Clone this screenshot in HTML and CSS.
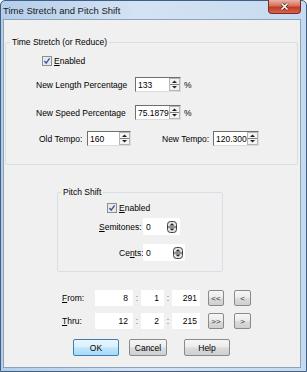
FILE: index.html
```html
<!DOCTYPE html>
<html lang="en">
<head>
    <meta charset="UTF-8">
    <title>Time Stretch and Pitch Shift</title>
    <link rel="stylesheet" href="styles.css">
</head>
<body>
    <div class="window">
        <div class="titlebar">
            <span class="title">Time Stretch and Pitch Shift</span>
            <span class="close">
                <svg width="11" height="9" viewBox="0 0 11 9"><path d="M2.5 1.5 L8.5 7.5 M8.5 1.5 L2.5 7.5" stroke="#5a2418" stroke-width="3"/><path d="M2.5 1.5 L8.5 7.5 M8.5 1.5 L2.5 7.5" stroke="#fff" stroke-width="1.6"/></svg>
            </span>
        </div>
        <div class="client">
            <fieldset class="group stretch">
                <legend>Time Stretch (or Reduce)</legend>
                <div class="row check-row">
                    <span class="checkbox"><svg width="10" height="10" viewBox="0 0 10 10"><rect x="0.5" y="0.5" width="9" height="9" fill="#e9e9ec" stroke="#8e8f8f"/><path d="M2.4 5 L4.2 7.2 L7.6 2.4" fill="none" stroke="#3c55a6" stroke-width="1.4"/></svg></span>
                    <span><u>E</u>nabled</span>
                </div>
                <div class="row pct-row first">
                    <span class="lbl pct-lbl">New Length Percentage</span>
                    <span class="spin sunken w46"><span class="val">133</span><span class="arrows"><svg width="11" height="13" viewBox="0 0 11 13"><rect x="0.5" y="0.5" width="10" height="12" fill="#f3f3f3" stroke="#b5b5b5"/><line x1="1" y1="6.5" x2="10" y2="6.5" stroke="#7d7d7d"/><path d="M3 5 L5.5 2.5 L8 5Z" fill="#222"/><path d="M3 8 L5.5 10.5 L8 8Z" fill="#222"/></svg></span></span>
                    <span class="unit">%</span>
                </div>
                <div class="row pct-row second">
                    <span class="lbl pct-lbl">New Speed Percentage</span>
                    <span class="spin sunken w46"><span class="val">75.1879</span><span class="arrows"><svg width="11" height="13" viewBox="0 0 11 13"><rect x="0.5" y="0.5" width="10" height="12" fill="#f3f3f3" stroke="#b5b5b5"/><line x1="1" y1="6.5" x2="10" y2="6.5" stroke="#7d7d7d"/><path d="M3 5 L5.5 2.5 L8 5Z" fill="#222"/><path d="M3 8 L5.5 10.5 L8 8Z" fill="#222"/></svg></span></span>
                    <span class="unit">%</span>
                </div>
                <div class="row tempo-row">
                    <span class="lbl old-lbl">Old Tempo:</span>
                    <span class="spin sunken w44"><span class="val">160</span><span class="arrows"><svg width="11" height="13" viewBox="0 0 11 13"><rect x="0.5" y="0.5" width="10" height="12" fill="#f3f3f3" stroke="#b5b5b5"/><line x1="1" y1="6.5" x2="10" y2="6.5" stroke="#7d7d7d"/><path d="M3 5 L5.5 2.5 L8 5Z" fill="#222"/><path d="M3 8 L5.5 10.5 L8 8Z" fill="#222"/></svg></span></span>
                    <span class="lbl new-lbl">New Tempo:</span>
                    <span class="spin sunken w46"><span class="val">120.300</span><span class="arrows"><svg width="11" height="13" viewBox="0 0 11 13"><rect x="0.5" y="0.5" width="10" height="12" fill="#f3f3f3" stroke="#b5b5b5"/><line x1="1" y1="6.5" x2="10" y2="6.5" stroke="#7d7d7d"/><path d="M3 5 L5.5 2.5 L8 5Z" fill="#222"/><path d="M3 8 L5.5 10.5 L8 8Z" fill="#222"/></svg></span></span>
                </div>
            </fieldset>

            <fieldset class="group pitch">
                <legend>Pitch Shift</legend>
                <div class="row pitch-check">
                    <span class="checkbox"><svg width="10" height="10" viewBox="0 0 10 10"><rect x="0.5" y="0.5" width="9" height="9" fill="#e9e9ec" stroke="#8e8f8f"/><path d="M2.4 5 L4.2 7.2 L7.6 2.4" fill="none" stroke="#3c55a6" stroke-width="1.4"/></svg></span>
                    <span><u>E</u>nabled</span>
                </div>
                <div class="row semi-row">
                    <span class="lbl semi-lbl"><u>S</u>emitones:</span>
                    <span class="spin flat w37"><span class="val">0</span><span class="round"><svg width="10" height="12" viewBox="0 0 10 12"><rect x="0.5" y="0.5" width="9" height="11" rx="3" fill="#e4e4e4" stroke="#3d3d3d"/><line x1="1" y1="6" x2="9" y2="6" stroke="#3d3d3d"/><path d="M2.5 4.6 L5 2.2 L7.5 4.6Z" fill="#222"/><path d="M2.5 7.4 L5 9.8 L7.5 7.4Z" fill="#222"/></svg></span></span>
                </div>
                <div class="row cents-row">
                    <span class="lbl cents-lbl">Ce<u>n</u>ts:</span>
                    <span class="spin flat w42"><span class="val">0</span><span class="round"><svg width="10" height="12" viewBox="0 0 10 12"><rect x="0.5" y="0.5" width="9" height="11" rx="3" fill="#e4e4e4" stroke="#3d3d3d"/><line x1="1" y1="6" x2="9" y2="6" stroke="#3d3d3d"/><path d="M2.5 4.6 L5 2.2 L7.5 4.6Z" fill="#222"/><path d="M2.5 7.4 L5 9.8 L7.5 7.4Z" fill="#222"/></svg></span></span>
                </div>
            </fieldset>

            <div class="row range-row from-row">
                <span class="lbl range-lbl"><u>F</u>rom:</span>
                <span class="field f1">8</span><span class="colon">:</span>
                <span class="field f2">1</span><span class="colon">:</span>
                <span class="field f3">291</span>
                <span class="btn nav first-nav">&lt;&lt;</span>
                <span class="btn nav second-nav">&lt;</span>
            </div>
            <div class="row range-row thru-row">
                <span class="lbl range-lbl"><u>T</u>hru:</span>
                <span class="field f1">12</span><span class="colon">:</span>
                <span class="field f2">2</span><span class="colon">:</span>
                <span class="field f3">215</span>
                <span class="btn nav first-nav">&gt;&gt;</span>
                <span class="btn nav second-nav">&gt;</span>
            </div>

            <div class="row buttons">
                <span class="btn push default">OK</span>
                <span class="btn push cancel">Cancel</span>
                <span class="btn push help">Help</span>
            </div>
        </div>
    </div>
</body>
</html>
```

FILE: styles.css
```css
body {
    margin: 0;
    font-family: "Liberation Sans", Arial, sans-serif;
    font-size: 8.5px;
    color: #000;
    background: #fff;
}

.window {
    width: 307px;
    height: 372px;
    box-sizing: border-box;
    border: 1px solid #3f5f84;
    border-radius: 5px 5px 0 0;
    background: linear-gradient(to right, #b4cde9, #d4e3f4 45%, #c6daef);
}

.titlebar {
    display: flex;
    align-items: flex-start;
    height: 18px;
}

.title {
    font-size: 9.5px;
    color: #1b1b1b;
    padding: 4px 0 0 2px;
}

.close {
    margin-left: auto;
    margin-right: 5px;
    margin-top: -1px;
    width: 33px;
    height: 14px;
    box-sizing: border-box;
    display: flex;
    align-items: center;
    justify-content: center;
    border: 1px solid #7b2c22;
    border-top: none;
    border-radius: 0 0 4px 4px;
    background: linear-gradient(#eab2a4, #d6705d 45%, #bf3b26 55%, #d8634a);
}

.client {
    width: 298px;
    height: 349px;
    box-sizing: border-box;
    margin: 0 5px 3px 2px;
    border: 1px solid #8da3bc;
    background: #f0f0f0;
    overflow: hidden;
}

.group {
    box-sizing: border-box;
    margin: 0;
    padding: 0;
    border: 1px solid #d5dfe5;
    border-radius: 2px;
    min-inline-size: 0;
}

.group legend {
    padding: 0 2px;
    line-height: 12px;
}

.stretch {
    width: 293px;
    margin: 16px 0 0 1px;
    padding-bottom: 18px;
}

.stretch legend {
    margin-left: 4px;
}

.pitch {
    width: 166px;
    margin: 21px 0 0 53px;
    padding-bottom: 10px;
}

.pitch legend {
    margin-left: 3px;
}

.row {
    display: flex;
    align-items: center;
}

.check-row {
    margin-top: 7px;
    height: 12px;
    padding-left: 36px;
}

.checkbox {
    display: flex;
    width: 10px;
    height: 10px;
    margin-right: 2px;
}

.pct-row {
    height: 15px;
    padding-left: 30px;
}

.pct-row.first {
    margin-top: 10px;
}

.pct-row.second {
    margin-top: 13px;
}

.pct-lbl {
    width: 99px;
}

.unit {
    margin-left: 3px;
}

.tempo-row {
    margin-top: 11px;
    height: 15px;
    padding-left: 33px;
}

.old-lbl {
    width: 48px;
}

.new-lbl {
    width: 51px;
    margin-left: 31px;
}

.spin {
    display: flex;
    align-items: center;
    box-sizing: border-box;
    background: #fff;
    overflow: hidden;
    white-space: nowrap;
}

.sunken {
    height: 15px;
    border: 1px solid;
    border-color: #6e6e6e #dcdcdc #dcdcdc #6e6e6e;
}

.sunken .val {
    flex: 1;
    padding-left: 2px;
    overflow: hidden;
}

.arrows {
    display: flex;
    flex-shrink: 0;
}

.flat {
    height: 17px;
}

.flat .val {
    flex: 1;
    padding-left: 3px;
}

.round {
    display: flex;
    margin-right: 3px;
}

.w37 { width: 37px; }
.w42 { width: 42px; }
.w44 { width: 44px; }
.w46 { width: 46px; }

.w42 .round {
    margin-right: 2px;
}

.pitch-check {
    margin-top: 4px;
    height: 11px;
    padding-left: 49px;
}

.semi-row {
    margin-top: 5px;
    height: 17px;
    padding-left: 41px;
}

.semi-lbl {
    width: 44px;
}

.cents-row {
    margin-top: 9px;
    height: 17px;
    padding-left: 61px;
}

.cents-lbl {
    width: 24px;
}

.range-row {
    height: 16px;
    padding-left: 58px;
}

.from-row {
    margin-top: 18px;
}

.thru-row {
    margin-top: 7px;
}

.range-lbl {
    width: 33px;
}

.field {
    height: 16px;
    box-sizing: border-box;
    background: #fff;
    text-align: right;
    padding-right: 5px;
    line-height: 16px;
}

.f1 { width: 38px; }
.f2 { width: 23px; }
.f3 { width: 28px; padding-right: 3px; }

.colon {
    width: 8px;
    text-align: center;
    color: #6a6a6a;
}

.colon + .f2 {
    margin-left: 0;
}

.btn {
    display: flex;
    align-items: center;
    justify-content: center;
    box-sizing: border-box;
    border: 1px solid #8a8a8a;
    border-radius: 2px;
    background: linear-gradient(#f6f6f6, #ebebeb 48%, #dcdcdc 52%, #cfcfcf);
}

.nav {
    height: 16px;
    font-size: 8px;
    color: #333;
}

.first-nav {
    width: 16px;
    margin-left: 8px;
}

.second-nav {
    width: 17px;
    margin-left: 10px;
}

.buttons {
    margin-top: 10px;
    height: 17px;
    padding-left: 69px;
}

.push {
    height: 17px;
    width: 46px;
}

.default {
    border-color: #3c7fb1;
    background: linear-gradient(#eaf6fd, #d9f0fc 48%, #bee6fd 52%, #a7d9f5);
}

.cancel {
    width: 38px;
    margin-left: 10px;
}

.help {
    margin-left: 17px;
}
```
